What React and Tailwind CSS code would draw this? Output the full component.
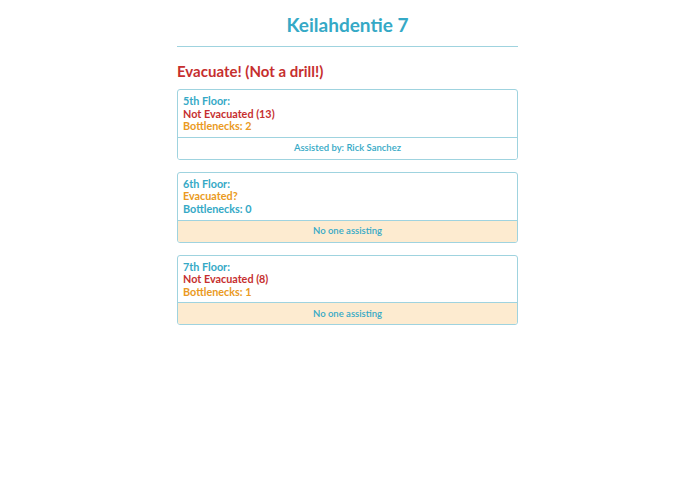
const floors = [
  { name: "5th Floor:", status: "Not Evacuated (13)", statusColor: "text-[#c62f2f]", bottlenecks: 2, bnColor: "text-[#ea9a22]", assist: "Assisted by: Rick Sanchez" },
  { name: "6th Floor:", status: "Evacuated?", statusColor: "text-[#ea9a22]", bottlenecks: 0, bnColor: "text-[#35a9c6]", assist: null },
  { name: "7th Floor:", status: "Not Evacuated (8)", statusColor: "text-[#c62f2f]", bottlenecks: 1, bnColor: "text-[#ea9a22]", assist: null },
];

function FloorCard({ floor }) {
  return (
    <div className="border border-[#9fd3df] rounded-[3px] overflow-hidden">
      <div className="px-[5px] pt-[5px] pb-[4px] text-[10.8px] font-bold leading-[12.6px] border-b border-[#9fd3df]">
        <div className="text-[#35a9c6]">{floor.name}</div>
        <div className={floor.statusColor}>{floor.status}</div>
        <div className={floor.bnColor}>Bottlenecks: {floor.bottlenecks}</div>
      </div>
      <div className={`h-[21px] flex items-center justify-center text-[9.5px] font-semibold text-[#35a9c6] ${floor.assist ? "bg-white" : "bg-[#fdebd0]"}`}>
        {floor.assist || "No one assisting"}
      </div>
    </div>
  );
}

export default function App() {
  return (
    <div className="min-h-screen bg-white" style={{ fontFamily: 'Lato, "Open Sans", sans-serif' }}>
      <div className="w-[341px] mx-auto pt-[14px]">
        <h1 className="text-center text-[19px] font-bold text-[#35a9c6] leading-[22px] pb-[10px] border-b border-[#9fd3df]">
          Keilahdentie 7
        </h1>
        <h2 className="text-[15px] font-bold text-[#c62f2f] mt-[15px] mb-[9px] leading-[18px]">Evacuate! (Not a drill!)</h2>
        <div className="flex flex-col gap-[12px]">
          {floors.map((f) => (
            <FloorCard key={f.name} floor={f} />
          ))}
        </div>
      </div>
    </div>
  );
}
